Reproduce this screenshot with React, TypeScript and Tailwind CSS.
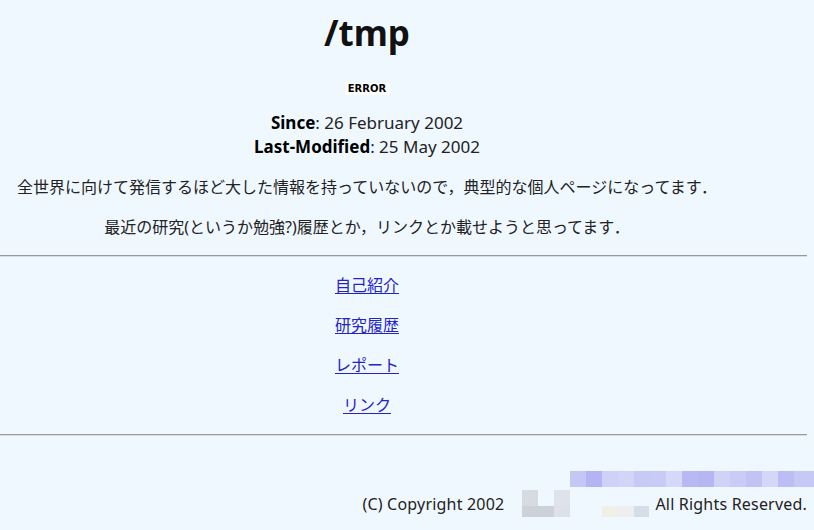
const font = "font-['Noto_Sans','Noto_Sans_CJK_JP',sans-serif]";

const strip = ["#c4c6f6", "#b4b4f2", "#cfd1f8", "#d2d4f8", "#c8caf6", "#c9cbf7", "#d6d8fa", "#b8b8f2", "#b6b6f2", "#d0d2f8", "#cacbf7", "#c2c2f4", "#d5d7f9", "#bcbdf4", "#c6c8f6"];

function Hr() {
  return <div className="h-[2px] w-[807px] border-t border-[#999] border-b border-b-[#d8dde2]" />;
}

export default function App() {
  return (
    <div className={`min-h-[530px] w-[814px] overflow-hidden bg-[#f0f8ff] text-[16px] text-[#222] ${font}`}>
      <div className="flex w-[734px] flex-col items-center text-center">
        <h1 className="mt-[13px] text-[35px] leading-[40px] font-bold text-[#111]">/tmp</h1>
        <div className="mt-[30px] flex h-[12px] w-[45px] items-center justify-center bg-white font-['DejaVu_Sans',sans-serif] text-[10px] font-bold leading-none text-black">ERROR</div>
        <div className="mt-[16px] text-[17px] leading-[24px]">
          <p><b className="text-black">Since</b>: 26 February 2002</p>
          <p><b className="text-black">Last-Modified</b>: 25 May 2002</p>
        </div>
        <p className="mt-[16px] leading-[24px] whitespace-nowrap">全世界に向けて発信するほど大した情報を持っていないので，典型的な個人ページになってます．</p>
        <p className="mt-[16px] leading-[24px]">最近の研究(というか勉強?)履歴とか，リンクとか載せようと思ってます．</p>
      </div>
      <div className="mt-[16px]"><Hr /></div>
      <div className="flex w-[734px] flex-col items-center gap-[16px] pt-[16px] pb-[17px] leading-[24px]">
        {["自己紹介", "研究履歴", "レポート", "リンク"].map((t) => (
          <a key={t} href="#" className="text-[#2323c8] underline underline-offset-2">{t}</a>
        ))}
      </div>
      <Hr />
      <div className="mt-[35px] flex justify-end">
        <div className="flex h-[16px]">
          {strip.map((c, i) => <div key={i} className="w-[16px]" style={{ background: c }} />)}
          <div className="w-[4px] bg-[#c6c8f6]" />
        </div>
      </div>
      <div className="mt-[3px] flex items-center justify-end pr-[7px] leading-[24px] tracking-[0.2px]">
        <span>(C) Copyright 2002</span>
        <div className="mx-[6px] ml-[18px] flex h-[27px] w-[127px] items-end">
          <div className="flex h-[27px] w-[48px] flex-col">
            <div className="flex h-[16px]">
              <div className="w-[16px] bg-[#d6dbe2]" />
              <div className="w-[16px]" />
              <div className="w-[16px] bg-[#dee2ea]" />
            </div>
            <div className="flex h-[11px]">
              <div className="w-[32px] bg-[#ccd1da]" />
              <div className="w-[16px] bg-[#dde1e9]" />
            </div>
          </div>
          <div className="ml-[32px] h-[11px] w-[16px] bg-[#f1efe6]" />
          <div className="h-[11px] w-[16px] bg-[#eceef2]" />
          <div className="h-[11px] w-[15px] bg-[#d5dde6]" />
        </div>
        <span>All Rights Reserved.</span>
      </div>
    </div>
  );
}
